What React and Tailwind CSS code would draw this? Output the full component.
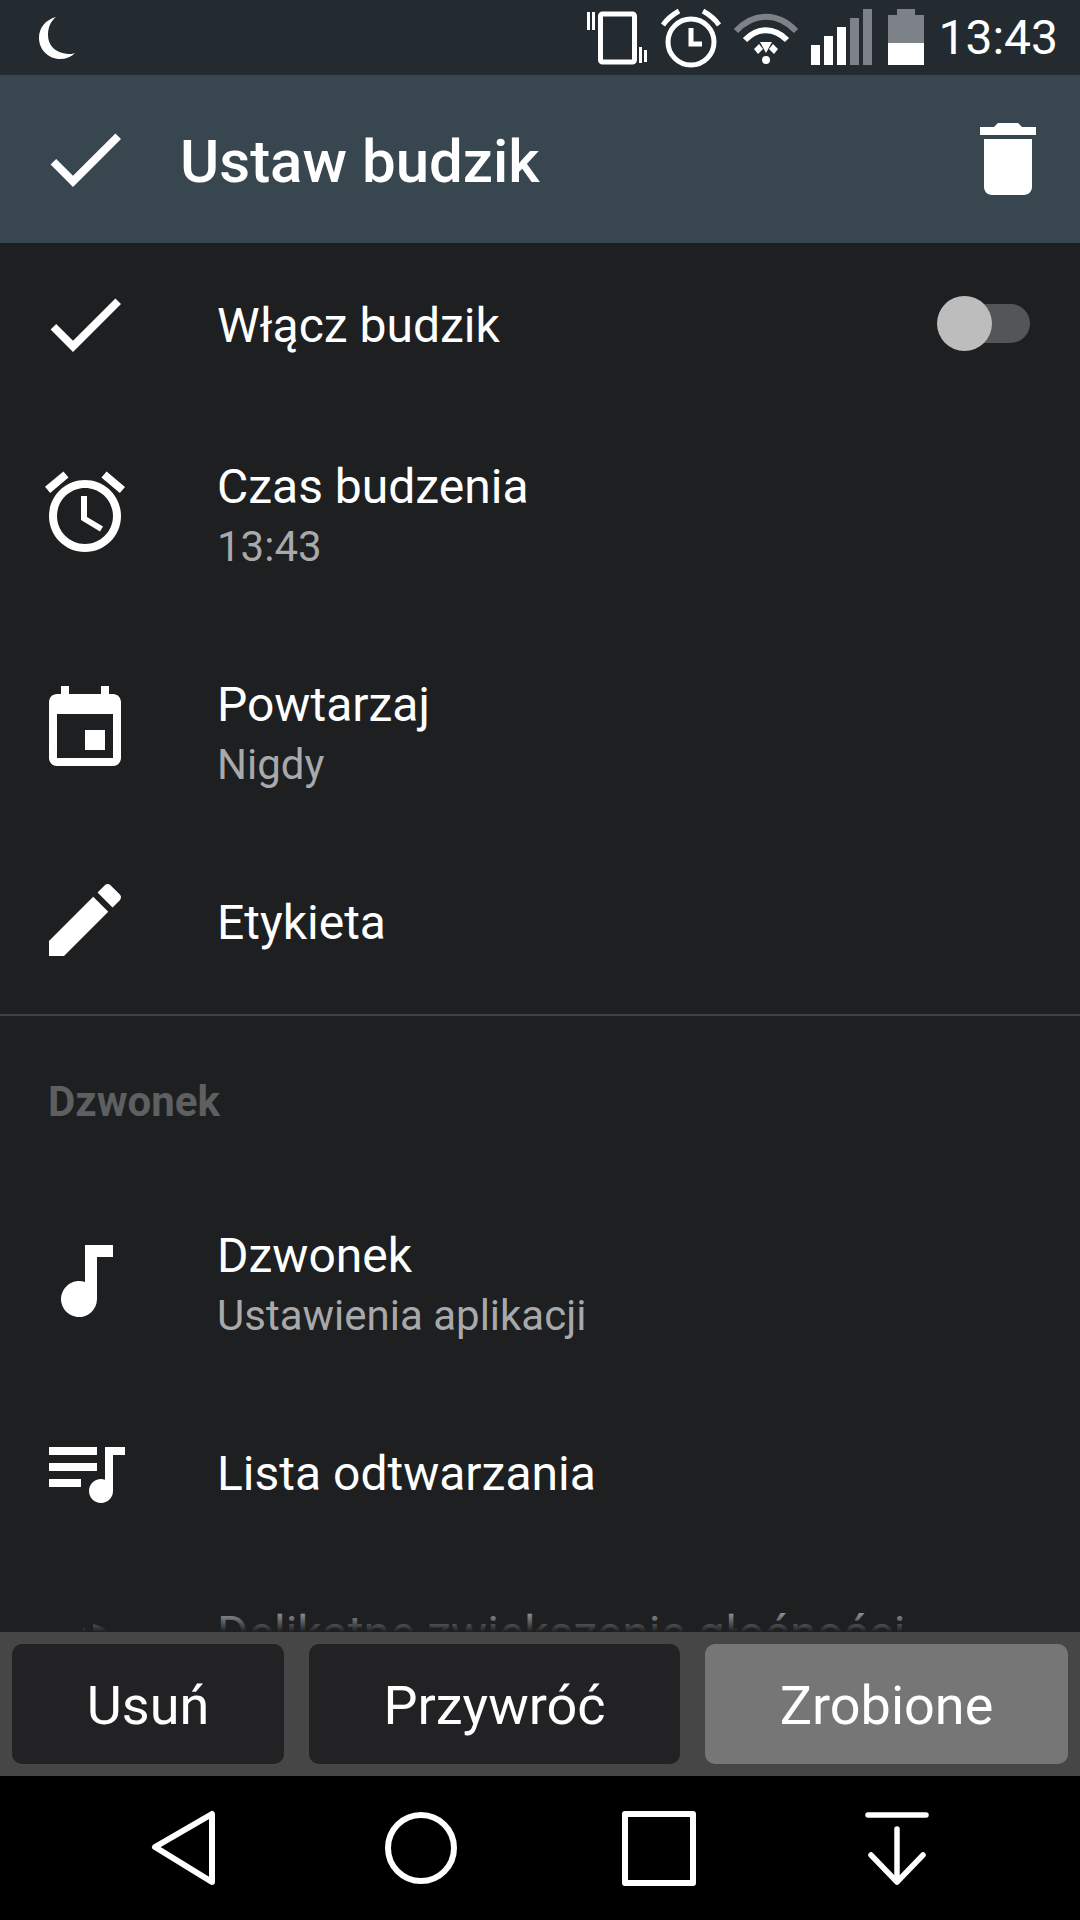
const doneIcon = "M9 16.2L4.8 12l-1.4 1.4L9 19 21 7l-1.4-1.4L9 16.2z";
const trashIcon = "M6 19c0 1.1.9 2 2 2h8c1.1 0 2-.9 2-2V7H6v12zM19 4h-3.5l-1-1h-5l-1 1H5v2h14V4z";
const alarmIcon = "M22 5.72l-4.6-3.86-1.29 1.53 4.6 3.86L22 5.72zM7.88 3.39L6.6 1.86 2 5.71l1.29 1.53 4.59-3.85zM12.5 8H11v6l4.75 2.85.75-1.23-4-2.37V8zM12 4c-4.97 0-9 4.03-9 9s4.03 9 9 9 9-4.03 9-9-4.03-9-9-9zm0 16c-3.87 0-7-3.13-7-7s3.13-7 7-7 7 3.13 7 7-3.13 7-7 7z";
const eventIcon = "M17 12h-5v5h5v-5zM16 1v2H8V1H6v2H5c-1.11 0-1.99.9-1.99 2L3 19c0 1.1.89 2 2 2h14c1.1 0 2-.9 2-2V5c0-1.1-.9-2-2-2h-1V1h-2zm3 18H5V8h14v11z";
const editIcon = "M3 17.25V21h3.75L17.81 9.94l-3.75-3.75L3 17.25zM20.71 7.04c.39-.39.39-1.02 0-1.41l-2.34-2.34c-.39-.39-1.02-.39-1.41 0l-1.83 1.83 3.75 3.75 1.83-1.83z";
const noteIcon = "M12 3h7v3h-4v10.5a4.5 4.5 0 1 1-3-4.24z";
const queueIcon = "M15 6H3v2h12V6zm0 4H3v2h12v-2zM3 16h8v-2H3v2zM17 6v8.18c-.31-.11-.65-.18-1-.18-1.66 0-3 1.34-3 3s1.34 3 3 3 3-1.34 3-3V8h3V6h-5z";
const volumeIcon = "M3 9v6h4l5 5V4L7 9H3zm13.5 3c0-1.77-1.02-3.29-2.5-4.03v8.05c1.48-.73 2.5-2.25 2.5-4.02zM14 3.23v2.06c2.89.86 5 3.54 5 6.71s-2.11 5.85-5 6.71v2.06c4.01-.91 7-4.49 7-8.77s-2.99-7.86-7-8.77z";

function Icon({ d, className = "" }) {
  return (
    <svg viewBox="0 0 24 24" className={`w-24 h-24 shrink-0 fill-current text-white ${className}`}>
      <path d={d} />
    </svg>
  );
}

function StatusIcons() {
  return (
    <div className="flex items-center">
      <svg viewBox="0 0 66 75" className="w-[66px] h-[75px] text-white">
        <rect x="16.5" y="14" width="34" height="48" rx="2" fill="none" stroke="currentColor" strokeWidth="5" />
        <rect x="3" y="12" width="3" height="18" fill="currentColor" />
        <rect x="8" y="12" width="3" height="18" fill="currentColor" />
        <rect x="55" y="47" width="3" height="16" fill="currentColor" />
        <rect x="60" y="50" width="3" height="12" fill="currentColor" />
      </svg>
      <svg viewBox="0 0 70 75" className="w-[70px] h-[75px] ml-[6px] text-white" fill="none" stroke="currentColor">
        <circle cx="35" cy="42" r="23" strokeWidth="5" />
        <path d="M35 28v16h11" strokeWidth="5" />
        <path d="M7 25C11 19 16 15 23 11" strokeWidth="5" />
        <path d="M47 11C54 15 59 19 63 25" strokeWidth="5" />
      </svg>
      <svg viewBox="0 0 72 75" className="w-[72px] h-[75px] ml-1">
        <path d="M6 31C24 12 48 12 66 31" fill="none" stroke="#7c8287" strokeWidth="6" />
        <path d="M15 40C28 27 44 27 57 40" fill="none" stroke="#fff" strokeWidth="6" />
        <path d="M24 49L29 44L33 49L28 54ZM48 49L43 44L39 49L44 54ZM30 42H42L36 53Z" fill="#fff" />
        <circle cx="36" cy="60" r="4" fill="#fff" />
      </svg>
      <svg viewBox="0 0 66 75" className="w-[66px] h-[75px] ml-[6px]">
        <rect x="3" y="45" width="9" height="20" fill="#fff" />
        <rect x="16" y="36" width="9" height="29" fill="#fff" />
        <rect x="29" y="27" width="9" height="38" fill="#fff" />
        <rect x="42" y="18" width="9" height="47" fill="#7c8287" />
        <rect x="55" y="9" width="9" height="56" fill="#7c8287" />
      </svg>
      <svg viewBox="0 0 42 75" className="w-[42px] h-[75px] ml-[11px]">
        <rect x="12" y="9" width="18" height="7" fill="#7c8287" />
        <rect x="3" y="15" width="36" height="28" fill="#7c8287" />
        <rect x="3" y="43" width="36" height="22" fill="#fff" />
      </svg>
    </div>
  );
}

// rows are top aligned: title stays on the same offset with or without a second line
function Row({ icon, title, sub, tall }) {
  return (
    <div className={`flex items-start pl-[37px] pr-[39px] shrink-0 ${tall ? "h-[218px]" : "h-[160px]"}`}>
      <Icon d={icon} className={tall ? "mt-[61px]" : "mt-[33px]"} />
      <div className="ml-[84px] flex-1 pt-[54px]">
        <div className="text-[48px] leading-[60px] text-white">{title}</div>
        {sub && <div className="text-[42px] leading-[60px] text-[#a8a9ab]">{sub}</div>}
      </div>
    </div>
  );
}

export default function App() {
  return (
    <div className="w-[1080px] h-[1920px] flex flex-col overflow-hidden bg-[#1d1f21] font-['Roboto',sans-serif]">
      <div className="h-[75px] shrink-0 bg-[#232b31] flex items-center pl-[39px] pr-[22px]">
        <svg viewBox="0 0 36 42" className="w-9 h-[42px] text-white fill-current">
          <path d="M17 0C6 3 0 11 0 21c0 12 10 21 21 21 6 0 11-2 15-6-2 1-5 1-7 1C16 36 9 28 9 18 9 10 12 4 17 0z" />
        </svg>
        <div className="ml-auto flex items-center gap-[11px]">
          <StatusIcons />
          <span className="text-[48px] text-white leading-none">13:43</span>
        </div>
      </div>

      <div className="h-[168px] shrink-0 bg-[#38474f] flex items-center pl-[37px] pr-6">
        <Icon d={doneIcon} />
        <span className="ml-[47px] pt-[6px] flex-1 text-[60px] font-medium text-white">Ustaw budzik</span>
        <Icon d={trashIcon} />
      </div>

      <div className="relative flex-1 min-h-0 overflow-hidden flex flex-col">
        <div className="h-[160px] flex items-start pl-[37px] pr-[50px] shrink-0">
          <Icon d={doneIcon} className="mt-[33px]" />
          <div className="ml-[84px] flex-1 pt-[53px] text-[48px] leading-[60px] text-white">Włącz budzik</div>
          <div className="relative self-center w-[85px] h-[39px] rounded-full bg-[#545556]">
            <div className="absolute -left-[8px] -top-[8px] w-[55px] h-[55px] rounded-full bg-[#bdbdbd]" />
          </div>
        </div>
        <Row icon={alarmIcon} title="Czas budzenia" sub="13:43" tall />
        <Row icon={eventIcon} title="Powtarzaj" sub="Nigdy" tall />
        <Row icon={editIcon} title="Etykieta" />
        <div className="h-[2px] mt-[15px] bg-[#3f4143] shrink-0" />
        <div className="h-[156px] pt-[56px] pl-[48px] text-[42px] leading-[60px] font-bold text-[#5d5f61] shrink-0">Dzwonek</div>
        <Row icon={noteIcon} title="Dzwonek" sub="Ustawienia aplikacji" tall />
        <Row icon={queueIcon} title="Lista odtwarzania" />
        <Row icon={volumeIcon} title="Delikatne zwiększenie głośności" tall />
        <div className="absolute left-0 right-0 bottom-0 h-[26px] bg-gradient-to-b from-[#1d1f21]/30 to-[#1d1f21]" />
      </div>

      <div className="h-[144px] shrink-0 bg-[#464646] flex items-center px-3 gap-[25px] text-[54px] text-white">
        <div className="w-[272px] h-[120px] pt-[2px] rounded-[10px] bg-[#222224] flex items-center justify-center">Usuń</div>
        <div className="w-[371px] h-[120px] pt-[2px] rounded-[10px] bg-[#222224] flex items-center justify-center">Przywróć</div>
        <div className="w-[363px] h-[120px] pt-[2px] rounded-[10px] bg-[#767676] flex items-center justify-center">Zrobione</div>
      </div>

      <div className="h-[144px] shrink-0 bg-black grid grid-cols-4 px-[66px] items-center justify-items-center text-white">
        <svg viewBox="0 0 80 80" className="w-20 h-20" fill="none" stroke="currentColor" strokeWidth="6" strokeLinejoin="round">
          <path d="M10 39L67 6V74Z" />
        </svg>
        <svg viewBox="0 0 80 80" className="w-20 h-20" fill="none" stroke="currentColor" strokeWidth="6">
          <circle cx="39" cy="40" r="33" />
        </svg>
        <svg viewBox="0 0 80 80" className="w-20 h-20" fill="none" stroke="currentColor" strokeWidth="6" strokeLinejoin="round">
          <rect x="6" y="6" width="68" height="69" />
        </svg>
        <svg viewBox="0 0 80 80" className="w-20 h-20" fill="none" stroke="currentColor" strokeWidth="5.5" strokeLinecap="round" strokeLinejoin="round">
          <path d="M12 7H70" />
          <path d="M41 21V73" />
          <path d="M15 47L41 74L67 47" />
        </svg>
      </div>
    </div>
  );
}
